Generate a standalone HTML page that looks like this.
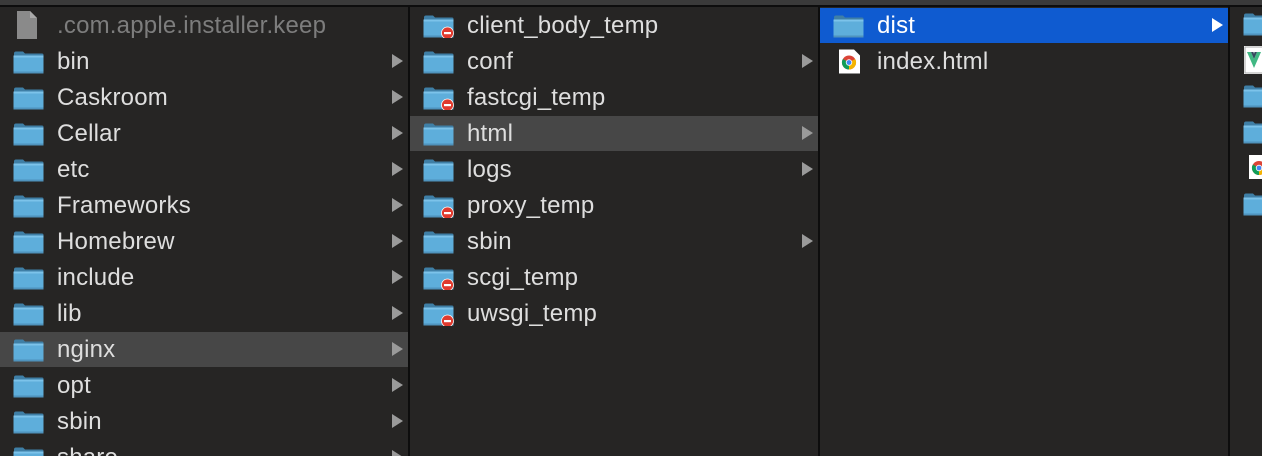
<!DOCTYPE html>
<html style="width:1262px;height:456px;overflow:hidden"><head><meta charset="utf-8"><style>
*{margin:0;padding:0;box-sizing:border-box}
body{width:1262px;height:456px;background:#262524;overflow:hidden;position:relative;font-family:"Liberation Sans",Helvetica,sans-serif;color:#dedede}
.top{position:absolute;left:0;top:0;width:1262px;height:5px;background:#3a3a3a}
.topl{position:absolute;left:0;top:5px;width:1262px;height:2px;background:#0d0d0d}
.div{position:absolute;top:5px;bottom:0;width:2px;background:#0d0d0d}
.r{position:absolute;height:35px;font-size:24px;line-height:36px}
.r .t{position:absolute;left:57px;top:0;letter-spacing:0.2px}
.r svg.f{position:absolute;left:13px;top:6px}
.r .a{position:absolute;top:10px;width:0;height:0;border-top:7px solid transparent;border-bottom:7px solid transparent;border-left:11px solid #9a9a9a}
.sel{background:#474747}
.blue{background:#0f5bd0;color:#fff}
</style></head><body>
<svg width="0" height="0" style="position:absolute"><defs>
<symbol id="fold" viewBox="0 0 31 24"><path d="M1 3.5Q1 1.5 3 1.5H10L12 3.5H29Q30.5 3.5 30.5 5V8H1Z" fill="#3f7fa6"/><rect x="0.5" y="5.5" width="30" height="18" rx="1.5" fill="#5eaedb"/><rect x="0.5" y="5.5" width="30" height="2" fill="#7cc3ea"/><rect x="0.5" y="21.5" width="30" height="2" fill="#4f93bd"/></symbol>
<symbol id="nogo" viewBox="0 0 31 24"><circle cx="24.5" cy="19" r="6" fill="#e03a2e" stroke="#fff" stroke-width="0.8"/><rect x="21" y="18" width="7" height="2.2" fill="#fff"/></symbol>
<symbol id="chrome" viewBox="0 0 24 24"><path d="M2 0H17L23 6V24H2Z" fill="#fff"/><circle cx="12" cy="13" r="7" fill="#db4437"/><path d="M12 13L5.9 9.5A7 7 0 0 0 12 20Z" fill="#0f9d58"/><path d="M12 13V20A7 7 0 0 0 18.1 9.5Z" fill="#f4b400"/><circle cx="12" cy="13" r="3.2" fill="#fff"/><circle cx="12" cy="13" r="2.4" fill="#4285f4"/></symbol>
</defs></svg>
<div class="top"></div><div class="topl"></div>
<div class="div" style="left:408px"></div>
<div class="div" style="left:818px"></div>
<div class="div" style="left:1228px"></div>

<div class="r" style="left:0;width:408px;top:8px;color:#7d7d7d"><svg style="position:absolute;left:16px;top:3px" width="22" height="28" viewBox="0 0 22 28"><path d="M1 0H14L21 7V28H1Z" fill="#8a8a8a"/><path d="M14 0V7H21" fill="#a9a9a9"/></svg><span class="t">.com.apple.installer.keep</span></div>
<div class="r" style="left:0;width:408px;top:44px"><svg class="f" width="31" height="24"><use href="#fold"/></svg><span class="t">bin</span><i class="a" style="left:392px"></i></div>
<div class="r" style="left:0;width:408px;top:80px"><svg class="f" width="31" height="24"><use href="#fold"/></svg><span class="t">Caskroom</span><i class="a" style="left:392px"></i></div>
<div class="r" style="left:0;width:408px;top:116px"><svg class="f" width="31" height="24"><use href="#fold"/></svg><span class="t">Cellar</span><i class="a" style="left:392px"></i></div>
<div class="r" style="left:0;width:408px;top:152px"><svg class="f" width="31" height="24"><use href="#fold"/></svg><span class="t">etc</span><i class="a" style="left:392px"></i></div>
<div class="r" style="left:0;width:408px;top:188px"><svg class="f" width="31" height="24"><use href="#fold"/></svg><span class="t">Frameworks</span><i class="a" style="left:392px"></i></div>
<div class="r" style="left:0;width:408px;top:224px"><svg class="f" width="31" height="24"><use href="#fold"/></svg><span class="t">Homebrew</span><i class="a" style="left:392px"></i></div>
<div class="r" style="left:0;width:408px;top:260px"><svg class="f" width="31" height="24"><use href="#fold"/></svg><span class="t">include</span><i class="a" style="left:392px"></i></div>
<div class="r" style="left:0;width:408px;top:296px"><svg class="f" width="31" height="24"><use href="#fold"/></svg><span class="t">lib</span><i class="a" style="left:392px"></i></div>
<div class="r sel" style="left:0;width:408px;top:332px"><svg class="f" width="31" height="24"><use href="#fold"/></svg><span class="t">nginx</span><i class="a" style="left:392px"></i></div>
<div class="r" style="left:0;width:408px;top:368px"><svg class="f" width="31" height="24"><use href="#fold"/></svg><span class="t">opt</span><i class="a" style="left:392px"></i></div>
<div class="r" style="left:0;width:408px;top:404px"><svg class="f" width="31" height="24"><use href="#fold"/></svg><span class="t">sbin</span><i class="a" style="left:392px"></i></div>
<div class="r" style="left:0;width:408px;top:440px;height:16px;overflow:hidden"><svg class="f" width="31" height="24"><use href="#fold"/></svg><span class="t">share</span><i class="a" style="left:392px"></i></div>

<div class="r" style="left:410px;width:408px;top:8px"><svg class="f" width="31" height="24"><use href="#fold"/><use href="#nogo"/></svg><span class="t">client_body_temp</span></div>
<div class="r" style="left:410px;width:408px;top:44px"><svg class="f" width="31" height="24"><use href="#fold"/></svg><span class="t">conf</span><i class="a" style="left:392px"></i></div>
<div class="r" style="left:410px;width:408px;top:80px"><svg class="f" width="31" height="24"><use href="#fold"/><use href="#nogo"/></svg><span class="t">fastcgi_temp</span></div>
<div class="r sel" style="left:410px;width:408px;top:116px"><svg class="f" width="31" height="24"><use href="#fold"/></svg><span class="t">html</span><i class="a" style="left:392px"></i></div>
<div class="r" style="left:410px;width:408px;top:152px"><svg class="f" width="31" height="24"><use href="#fold"/></svg><span class="t">logs</span><i class="a" style="left:392px"></i></div>
<div class="r" style="left:410px;width:408px;top:188px"><svg class="f" width="31" height="24"><use href="#fold"/><use href="#nogo"/></svg><span class="t">proxy_temp</span></div>
<div class="r" style="left:410px;width:408px;top:224px"><svg class="f" width="31" height="24"><use href="#fold"/></svg><span class="t">sbin</span><i class="a" style="left:392px"></i></div>
<div class="r" style="left:410px;width:408px;top:260px"><svg class="f" width="31" height="24"><use href="#fold"/><use href="#nogo"/></svg><span class="t">scgi_temp</span></div>
<div class="r" style="left:410px;width:408px;top:296px"><svg class="f" width="31" height="24"><use href="#fold"/><use href="#nogo"/></svg><span class="t">uwsgi_temp</span></div>

<div class="r blue" style="left:820px;width:408px;top:8px"><svg class="f" width="31" height="24"><use href="#fold"/></svg><span class="t">dist</span><i class="a" style="left:392px;border-left-color:#fff"></i></div>
<div class="r" style="left:820px;width:408px;top:44px"><svg style="position:absolute;left:17px;top:5px" width="24" height="25"><use href="#chrome"/></svg><span class="t">index.html</span></div>

<svg style="position:absolute;left:1243px;top:12px" width="31" height="24"><use href="#fold"/></svg>
<svg style="position:absolute;left:1244px;top:46px" width="24" height="28" viewBox="0 0 24 28"><rect x="0" y="0" width="24" height="28" fill="#fff"/><rect x="1" y="1" width="22" height="26" fill="none" stroke="#aaa"/><path d="M3 6L10 22L17 6H13L10 13L7 6Z" fill="#41b883"/><path d="M7 6L10 13L13 6H10.5L10 8L9.5 6Z" fill="#35495e"/></svg>
<svg style="position:absolute;left:1243px;top:84px" width="31" height="24"><use href="#fold"/></svg>
<svg style="position:absolute;left:1243px;top:120px" width="31" height="24"><use href="#fold"/></svg>
<svg style="position:absolute;left:1247px;top:153px" width="24" height="28"><use href="#chrome"/></svg>
<svg style="position:absolute;left:1243px;top:192px" width="31" height="24"><use href="#fold"/></svg>
</body></html>
